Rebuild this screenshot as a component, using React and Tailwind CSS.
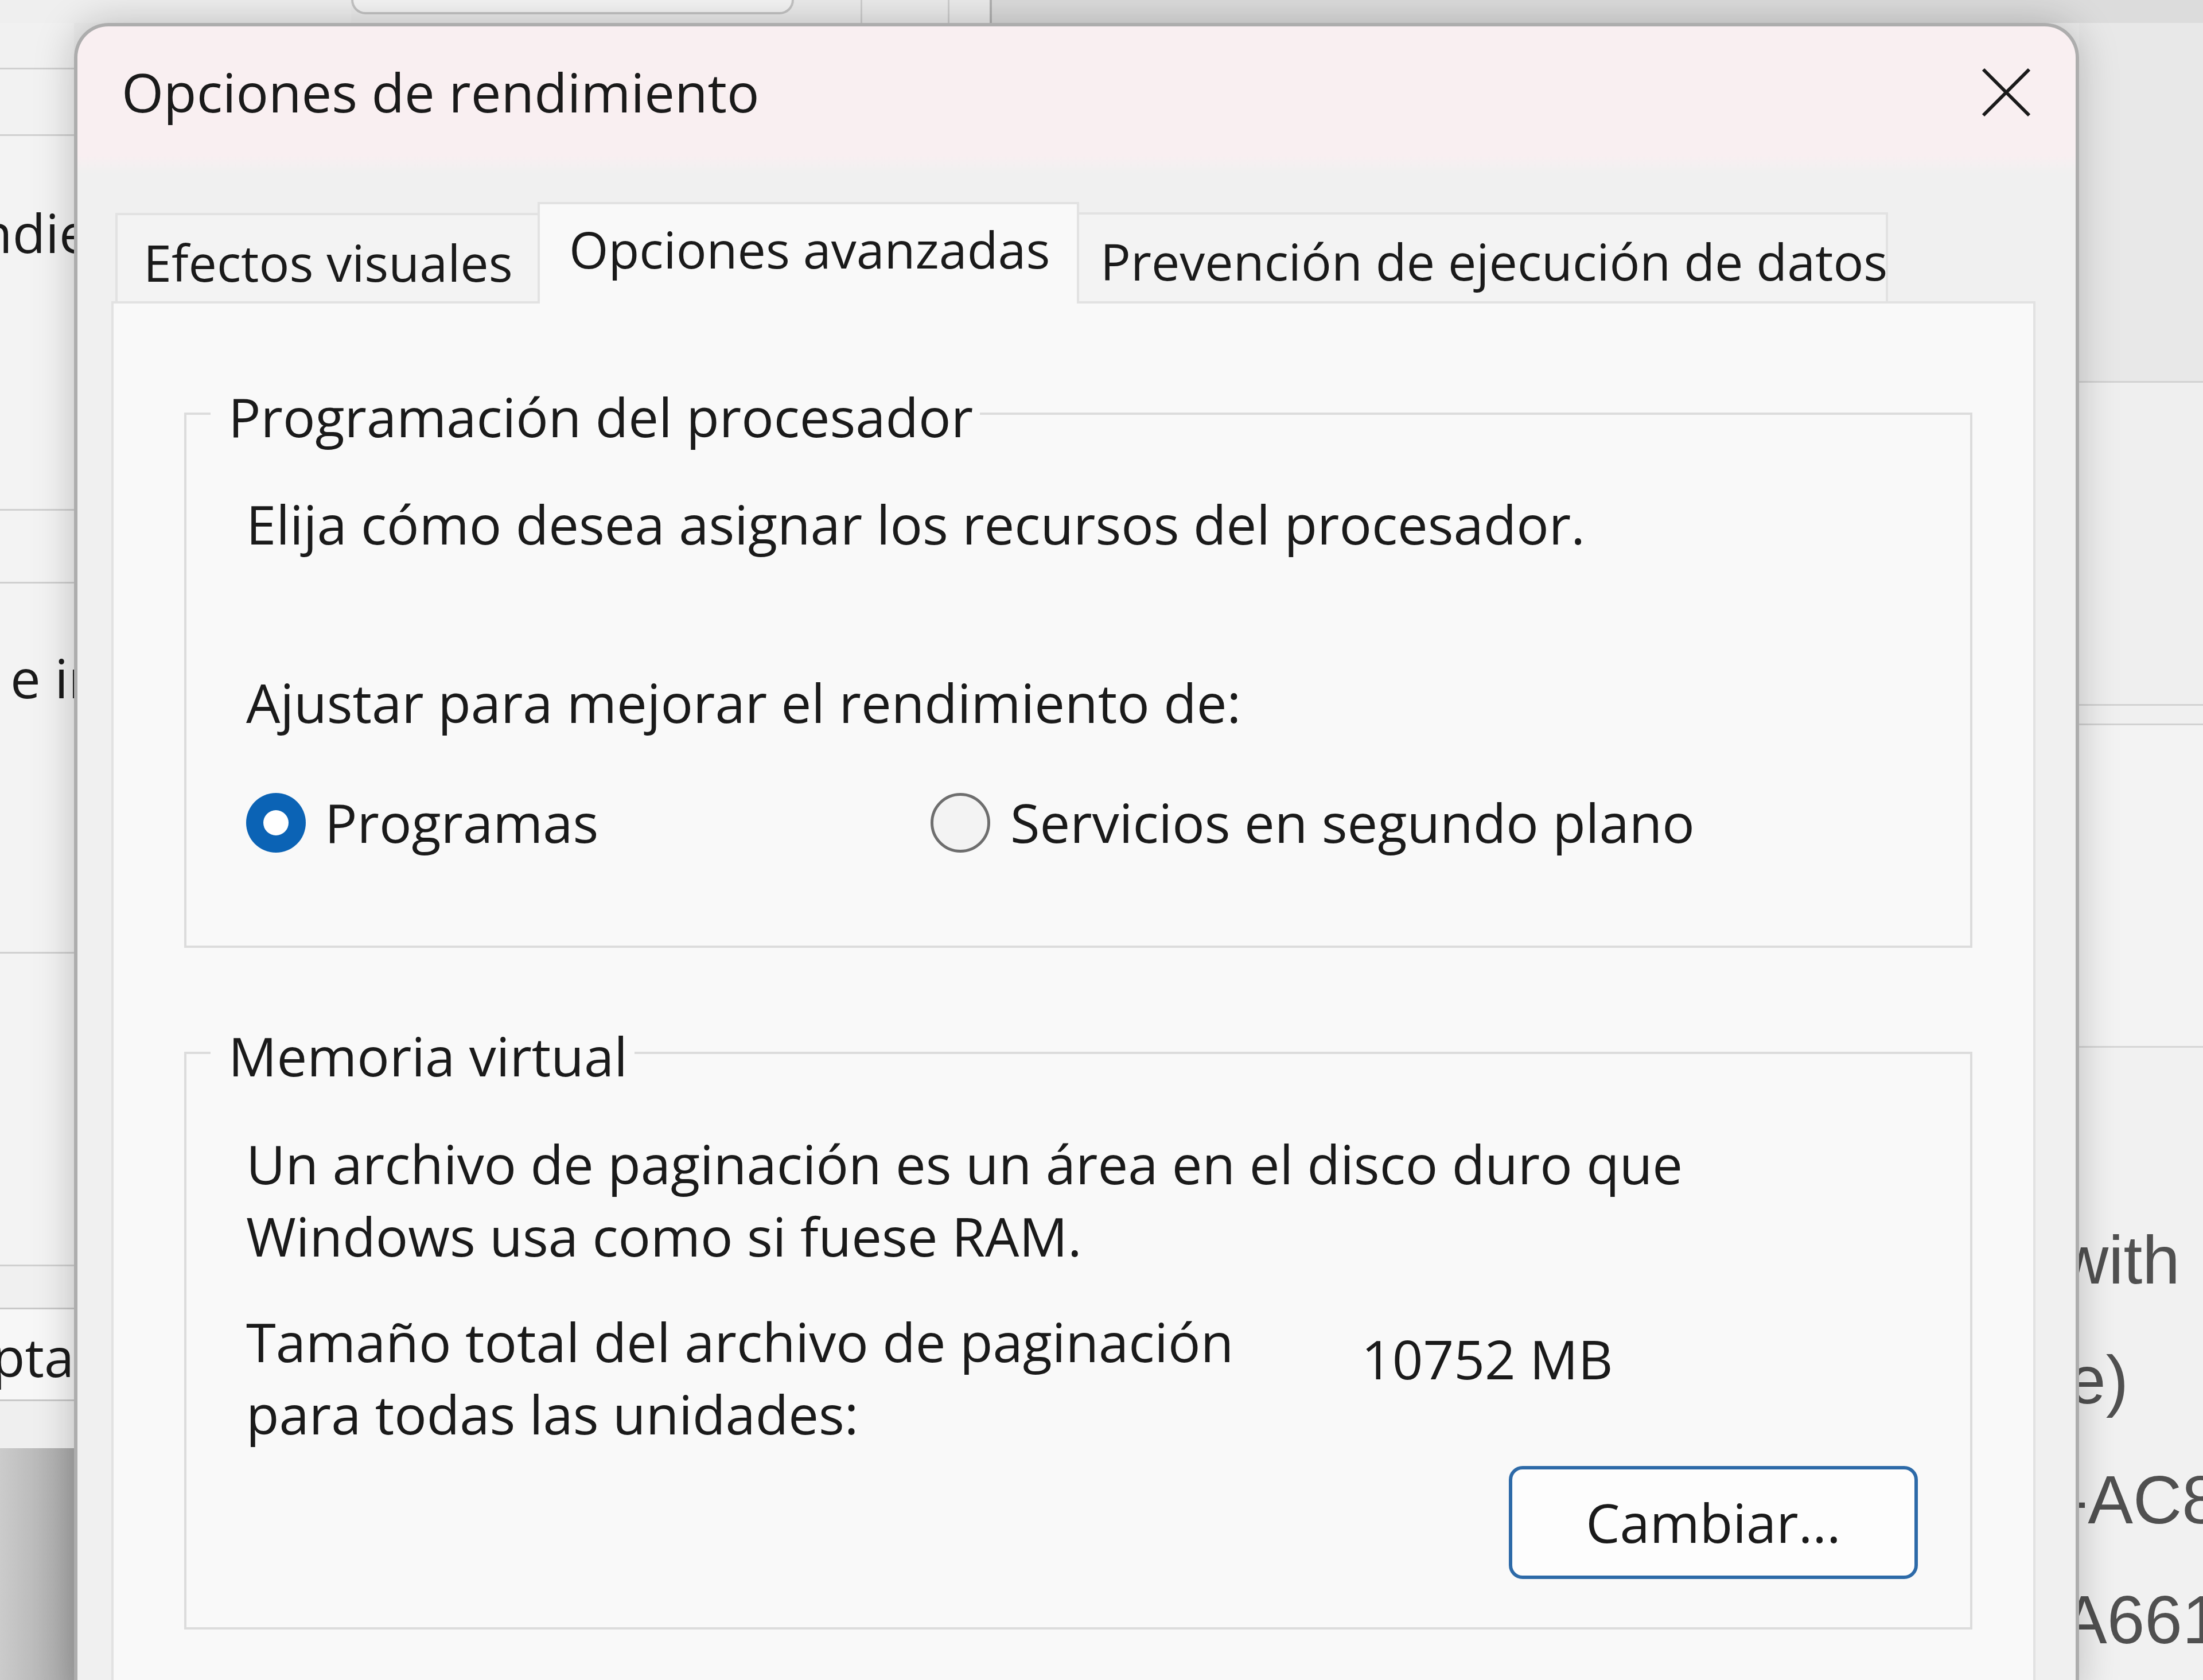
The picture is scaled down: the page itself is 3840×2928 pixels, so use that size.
import React from 'react';

const ui = "font-['Open_Sans',sans-serif] text-[94px] leading-[125px] text-[#1a1a1a] whitespace-nowrap";
const tabText = "font-['Open_Sans',sans-serif] text-[88px] leading-[125px] text-[#1a1a1a] whitespace-nowrap";
const bgText = "font-['Liberation_Sans',Arial,sans-serif] text-[118px] leading-[209px] text-[#505050] whitespace-nowrap";

function Radio({ checked }) {
  if (checked) {
    return (
      <span className="flex h-[104px] w-[104px] shrink-0 items-center justify-center rounded-full bg-[#0b63b5]">
        <span className="h-[44px] w-[44px] rounded-full bg-white" />
      </span>
    );
  }
  return <span className="h-[104px] w-[104px] shrink-0 rounded-full border-[5px] border-[#6e6e6e] bg-[#f3f3f3]" />;
}

function GroupBox({ title, className, children }) {
  return (
    <div className={`relative border-[4px] border-[#dcdcdc] ${className}`}>
      <span className={`absolute left-[42px] top-[-59px] bg-[#f9f9f9] pl-[31px] pr-[12px] ${ui}`}>{title}</span>
      {children}
    </div>
  );
}

function LeftStrip() {
  return (
    <div className="flex w-[129px] shrink-0 flex-col">
      <div className="h-[81px] border-b-[3px] border-[#d0d0d0] bg-[#f1f1f1]" />
      <div className="h-[116px] border-b-[3px] border-[#d0d0d0] bg-[#f2f2f2]" />
      <div className="h-[653px] border-b-[3px] border-[#d0d0d0] bg-[#f3f3f3] pt-[106px]">
        <div className={`-ml-[36px] ${ui}`}>ndie</div>
      </div>
      <div className="h-[127px] border-b-[3px] border-[#d0d0d0] bg-[#f3f3f3]" />
      <div className="h-[645px] border-b-[3px] border-[#d0d0d0] bg-[#f3f3f3] pt-[102px]">
        <div className={`ml-[18px] ${ui}`}>e ir</div>
      </div>
      <div className="h-[545px] border-b-[3px] border-[#d0d0d0] bg-[#f3f3f3]" />
      <div className="h-[75px] border-b-[3px] border-[#c8c8c8] bg-[#f0f0f0]" />
      <div className="h-[160px] border-b-[3px] border-[#c8c8c8] bg-[#f7f7f7] pt-[20px]">
        <div className={`-ml-[14px] ${ui}`}>pta</div>
      </div>
      <div className="h-[82px] bg-[#efefef]" />
      <div className="flex-1 bg-[linear-gradient(to_right,#cbcbcb,#a9a9a9)]" />
    </div>
  );
}

function RightStrip() {
  return (
    <div className="flex w-[216px] shrink-0 flex-col">
      <div className="h-[633px] border-b-[3px] border-[#d2d2d2] bg-[#e8e8e8]" />
      <div className="h-[568px] border-b-[3px] border-[#d2d2d2] bg-[#efefef]" />
      <div className="h-[34px] border-b-[3px] border-[#d2d2d2] bg-[#f0f0f0]" />
      <div className="h-[567px] border-b-[3px] border-[#d6d6d6] bg-[#f3f3f3]" />
      <div className="flex flex-1 flex-col bg-[#f1f1f1] pt-[266px]">
        <div className={`-ml-[34px] ${bgText}`}>with</div>
        <div className={`-ml-[19px] ${bgText}`}>e)</div>
        <div className={`-ml-[24px] ${bgText}`}>-AC8</div>
        <div className={`-ml-[30px] ${bgText}`}>A661</div>
      </div>
    </div>
  );
}

function TopStrip() {
  return (
    <div className="flex h-[40px] bg-[#ececec]">
      <div className="w-[612px] bg-[#efefef]" />
      <div className="h-[25px] w-[772px] rounded-b-[30px] border-[4px] border-t-0 border-[#c4c4c4] bg-[#f5f5f5]" />
      <div className="w-[116px]" />
      <div className="w-[3px] bg-[#cfcfcf]" />
      <div className="w-[149px]" />
      <div className="w-[3px] bg-[#cfcfcf]" />
      <div className="w-[70px]" />
      <div className="w-[4px] bg-[#b2b2b2]" />
      <div className="flex-1 bg-[#dcdcdc]" />
    </div>
  );
}

export default function App() {
  return (
    <div className="relative h-[2928px] w-[3840px] overflow-hidden bg-[#ececec]">
      <TopStrip />
      <div className="flex h-[2888px]">
        <LeftStrip />
        <div className="flex-1 bg-[#ececec]" />
        <RightStrip />
      </div>

      {/* dialog window */}
      <div className="absolute left-[129px] top-[40px] z-10 flex h-[2920px] w-[3495px] flex-col rounded-t-[60px] border-[6px] border-b-0 border-[#adadad] bg-[linear-gradient(to_bottom,#f9eff1_0px,#f9eff1_224px,#f0f0f0_256px)] shadow-[0_0_70px_rgba(0,0,0,0.22)]">
        <div className="flex items-center justify-between pl-[77px] pr-[77px] pt-[52px]">
          <span className={ui}>Opciones de rendimiento</span>
          <svg width="88" height="88" viewBox="0 0 88 88">
            <path d="M4 4 L84 84 M84 4 L4 84" stroke="#1a1a1a" strokeWidth="6" fill="none" />
          </svg>
        </div>

        <div className="mt-[129px] flex items-end pl-[66px]">
          <div className="flex h-[154px] w-[736px] items-center border-[4px] border-b-0 border-r-0 border-[#e2e2e2] bg-[#f3f3f3] pl-[45px] pt-[14px]">
            <span className={tabText}>Efectos visuales</span>
          </div>
          <div className="relative z-10 -mb-[4px] flex h-[177px] w-[944px] items-center border-[4px] border-b-0 border-[#e2e2e2] bg-[#f9f9f9] pb-[17px] pl-[51px]">
            <span className={tabText}>Opciones avanzadas</span>
          </div>
          <div className="flex h-[155px] w-[1410px] items-center border-[4px] border-b-0 border-l-0 border-[#e2e2e2] bg-[#f3f3f3] pl-[37px] pt-[12px]">
            <span className={`${tabText} text-[87px]`}>Prevención de ejecución de datos</span>
          </div>
        </div>

        <div className="ml-[59px] flex w-[3354px] flex-1 flex-col border-[4px] border-[#e2e2e2] bg-[#f9f9f9]">
          <GroupBox title="Programación del procesador" className="ml-[123px] mt-[190px] w-[3117px] pb-[152px] pl-[104px] pt-[128px]">
            <p className={ui}>Elija cómo desea asignar los recursos del procesador.</p>
            <p className={`mt-[186px] ${ui}`}>Ajustar para mejorar el rendimiento de:</p>
            <div className="mt-[84px] flex items-center">
              <label className="flex w-[1193px] items-center gap-[33px]">
                <Radio checked />
                <span className={ui}>Programas</span>
              </label>
              <label className="flex items-center gap-[35px]">
                <Radio />
                <span className={ui}>Servicios en segundo plano</span>
              </label>
            </div>
          </GroupBox>

          <GroupBox title="Memoria virtual" className="ml-[123px] mt-[181px] w-[3117px] pb-[84px] pl-[104px] pt-[128px]">
            <p className={`${ui} leading-[126px]`}>
              Un archivo de paginación es un área en el disco duro que
              <br />
              Windows usa como si fuese RAM.
            </p>
            <div className="mt-[58px] flex">
              <p className={`w-[1944px] ${ui} leading-[126px]`}>
                Tamaño total del archivo de paginación
                <br />
                para todas las unidades:
              </p>
              <p className={`mt-[31px] ${ui}`}>10752 MB</p>
            </div>
            <div className="mt-[28px] flex justify-end pr-[91px]">
              <button className="flex h-[197px] w-[713px] items-center justify-center rounded-[24px] border-[6px] border-[#2d6aa8] bg-[#fdfdfd]">
                <span className={ui}>Cambiar...</span>
              </button>
            </div>
          </GroupBox>
        </div>
      </div>
    </div>
  );
}
